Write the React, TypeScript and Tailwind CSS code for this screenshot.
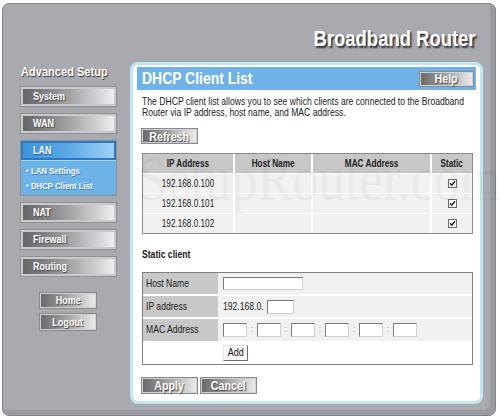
import React from "react";

const F = "font-['Liberation_Sans',Arial,sans-serif]";

function T({ children, o = "l" }: { children: React.ReactNode; o?: "l" | "c" | "r" }) {
  const cls = o === "l" ? "origin-left" : o === "r" ? "origin-right" : "origin-center";
  return <span className={`inline-block whitespace-nowrap scale-x-[0.82] ${cls}`}>{children}</span>;
}

function SideBtn({ label, className = "" }: { label: string; className?: string }) {
  return (
    <div
      className={`ml-[18px] w-[95px] h-[19px] border-2 border-[#c9c9cc] shadow-[0_0_0_1px_#8f8f94] bg-linear-to-r from-[#656568] via-[#a2a2a5] to-[#eeeef0] flex items-center pl-[10px] text-white font-bold text-[11px] leading-none [text-shadow:1px_1px_1px_#444] ${className}`}
    >
      <T>{label}</T>
    </div>
  );
}

function GrayBtn({ label, className = "" }: { label: string; className?: string }) {
  return (
    <div
      className={`border border-[#d2d2d4] shadow-[0_0_0_1px_#8a8a8e] bg-linear-to-r from-[#6a6a6d] via-[#a6a6a9] to-[#ebebed] flex items-center justify-center text-white font-bold leading-none [text-shadow:1px_1px_1px_#444] ${className}`}
    >
      <T o="c">{label}</T>
    </div>
  );
}

function Check() {
  return (
    <svg width="9" height="9" viewBox="0 0 9 9">
      <rect x="0.5" y="0.5" width="8" height="8" fill="#fff" stroke="#6a6a6a" />
      <path d="M2 4.2 L3.8 6.2 L7 2.2" fill="none" stroke="#222" strokeWidth="1.4" />
    </svg>
  );
}

function Inp({ className = "" }: { className?: string }) {
  return (
    <div
      className={`bg-white border border-t-[#7a7a7a] border-l-[#7a7a7a] border-r-[#d0d0d0] border-b-[#d0d0d0] ${className}`}
    />
  );
}

const rows = ["192.168.0.100", "192.168.0.101", "192.168.0.102"];

export default function App() {
  return (
    <div className={`w-[500px] h-[420px] bg-white pt-[3px] pl-[2px] relative overflow-hidden ${F}`}>
      <div className="w-[494px] h-[413px] rounded-[7px] bg-[#a9aaaf] border border-[#84858a] shadow-[inset_-5px_-5px_0_#9a9ba0] flex flex-col">
        {/* Title */}
        <div className="h-[58px] pt-[23px] pr-[19px] flex justify-end">
          <div className="text-white font-bold text-[22.5px] leading-[24px] [text-shadow:2px_2px_2px_#2e2e2e]">
            <T o="r">Broadband Router</T>
          </div>
        </div>

        <div className="flex flex-row">
          {/* Sidebar */}
          <div className="w-[127px] flex flex-col">
            <div className="mt-[2px] ml-[18px] text-white font-bold text-[13.5px] leading-[16px] [text-shadow:1px_1px_1px_#333]">
              <T>Advanced Setup</T>
            </div>
            <SideBtn label="System" className="mt-[7px]" />
            <SideBtn label="WAN" className="mt-[8px]" />
            <div className="mt-[8px] ml-[18px] w-[95px] flex flex-col shadow-[0_0_0_1px_#8f8f94]">
              <div className="h-[19px] border-2 border-[#2f78bf] bg-linear-to-r from-[#3c94de] via-[#5aa9e6] to-[#9fd1f4] flex items-center pl-[10px] text-white font-bold text-[11px] leading-none [text-shadow:1px_1px_1px_#245a8a]">
                <T>LAN</T>
              </div>
              <div className="h-[35px] bg-[#6db3e8] border-t border-[#a9d6f4] flex flex-col justify-center gap-[4px] pl-[5px] text-white font-bold text-[9.5px] leading-[11px] [text-shadow:1px_1px_0_#3c7cb0]">
                <div>
                  <T>• LAN Settings</T>
                </div>
                <div>
                  <T>• DHCP Client List</T>
                </div>
              </div>
            </div>
            <SideBtn label="NAT" className="mt-[8px]" />
            <SideBtn label="Firewall" className="mt-[8px]" />
            <SideBtn label="Routing" className="mt-[8px]" />
            <GrayBtn label="Home" className="mt-[17px] ml-[37px] w-[56px] h-[15px] text-[11px]" />
            <GrayBtn label="Logout" className="mt-[6px] ml-[37px] w-[56px] h-[16px] text-[11px]" />
          </div>

          {/* Content panel */}
          <div className="w-[353px] h-[342px] border-[3px] border-[#c2e7f0] rounded-[8px] bg-white flex flex-col">
            <div className="mx-[4px] mt-[2px] h-[23px] bg-[#70b2e7] flex items-center justify-between pl-[5px] pr-[3px]">
              <div className="text-white font-bold text-[17px] leading-none">
                <T>DHCP Client List</T>
              </div>
              <GrayBtn label="Help" className="w-[53px] h-[14px] text-[13px]" />
            </div>

            <div className="pl-[9px] pr-[7px] flex flex-col">
              <div className="mt-[6px] w-[404px] scale-x-[0.82] origin-left text-[10.5px] leading-[11px] text-[#1c1c1c]">
                The DHCP client list allows you to see which clients are connected to the Broadband Router via IP address, host name, and MAC address.
              </div>

              <GrayBtn label="Refresh" className="mt-[11px] w-[55px] h-[14px] text-[13px]" />

              {/* Client table */}
              <div className="mt-[10px] border border-[#8a8a8a] text-[10px] text-[#222]">
                <div className="h-[19px] bg-[#c7c7c7] grid grid-cols-[92px_78px_119px_1fr] items-center font-bold text-[10px] text-[#222]">
                  <div className="h-full flex items-center justify-center border-r-2 border-white">
                    <T o="c">IP Address</T>
                  </div>
                  <div className="h-full flex items-center justify-center border-r-2 border-white">
                    <T o="c">Host Name</T>
                  </div>
                  <div className="h-full flex items-center justify-center border-r-2 border-white">
                    <T o="c">MAC Address</T>
                  </div>
                  <div className="flex justify-center">
                    <T o="c">Static</T>
                  </div>
                </div>
                {rows.map((ip) => (
                  <div key={ip} className="h-[20px] bg-[#f1f1f1] border-t border-white grid grid-cols-[92px_78px_119px_1fr] items-center">
                    <div className="h-full flex items-center justify-center border-r-2 border-white">
                      <T o="c">{ip}</T>
                    </div>
                    <div className="h-full border-r-2 border-white" />
                    <div className="h-full border-r-2 border-white" />
                    <div className="flex justify-center pl-[1px]">
                      <Check />
                    </div>
                  </div>
                ))}
              </div>

              <div className="mt-[14px] font-bold text-[10.5px] leading-[12px] text-[#1c1c1c]">
                <T>Static client</T>
              </div>

              {/* Static client table */}
              <div className="mt-[12px] border border-[#808080] text-[10.5px] text-[#222]">
                <div className="h-[23px] flex border-b-2 border-white">
                  <div className="w-[75px] bg-[#c8c8c8] flex items-center pl-[3px]">
                    <T>Host Name</T>
                  </div>
                  <div className="flex-1 bg-[#f1f1f1] flex items-center pl-[5px]">
                    <Inp className="w-[80px] h-[13px]" />
                  </div>
                </div>
                <div className="h-[23px] flex border-b-2 border-white">
                  <div className="w-[75px] bg-[#c8c8c8] flex items-center pl-[3px]">
                    <T>IP address</T>
                  </div>
                  <div className="flex-1 bg-[#f1f1f1] flex items-center pl-[5px]">
                    <span className="w-[44px] shrink-0">
                      <T>192.168.0.</T>
                    </span>
                    <Inp className="w-[27px] h-[14px]" />
                  </div>
                </div>
                <div className="h-[22px] flex">
                  <div className="w-[75px] bg-[#c8c8c8] flex items-center pl-[3px]">
                    <T>MAC Address</T>
                  </div>
                  <div className="flex-1 bg-[#f1f1f1] flex items-center pl-[5px]">
                    {[0, 1, 2, 3, 4, 5].map((i) => (
                      <React.Fragment key={i}>
                        {i > 0 && <span className="w-[10px] text-center text-[#9a9a9a] text-[9px]">:</span>}
                        <Inp className="w-[24px] h-[14px]" />
                      </React.Fragment>
                    ))}
                  </div>
                </div>
                <div className="h-[23px] flex bg-white">
                  <div className="w-[75px]" />
                  <div className="flex items-center pl-[5px]">
                    <div className="w-[25px] h-[16px] bg-[#fafafa] border border-t-[#e4e4e4] border-l-[#e4e4e4] border-r-[#6e6e6e] border-b-[#6e6e6e] flex items-center justify-center text-[11px] text-[#111]">
                      <T o="c">Add</T>
                    </div>
                  </div>
                </div>
              </div>

              <div className="mt-[13px] flex gap-[4px]">
                <GrayBtn label="Apply" className="w-[55px] h-[15px] text-[13px]" />
                <GrayBtn label="Cancel" className="w-[55px] h-[15px] text-[13px]" />
              </div>
            </div>
          </div>
        </div>
      </div>

      {/* watermark */}
      <div className="absolute left-[138px] top-[147px] pointer-events-none font-['Liberation_Serif',serif] text-[64px] leading-none text-black/[0.035]">
        <T>SetupRouter.com</T>
      </div>
    </div>
  );
}
